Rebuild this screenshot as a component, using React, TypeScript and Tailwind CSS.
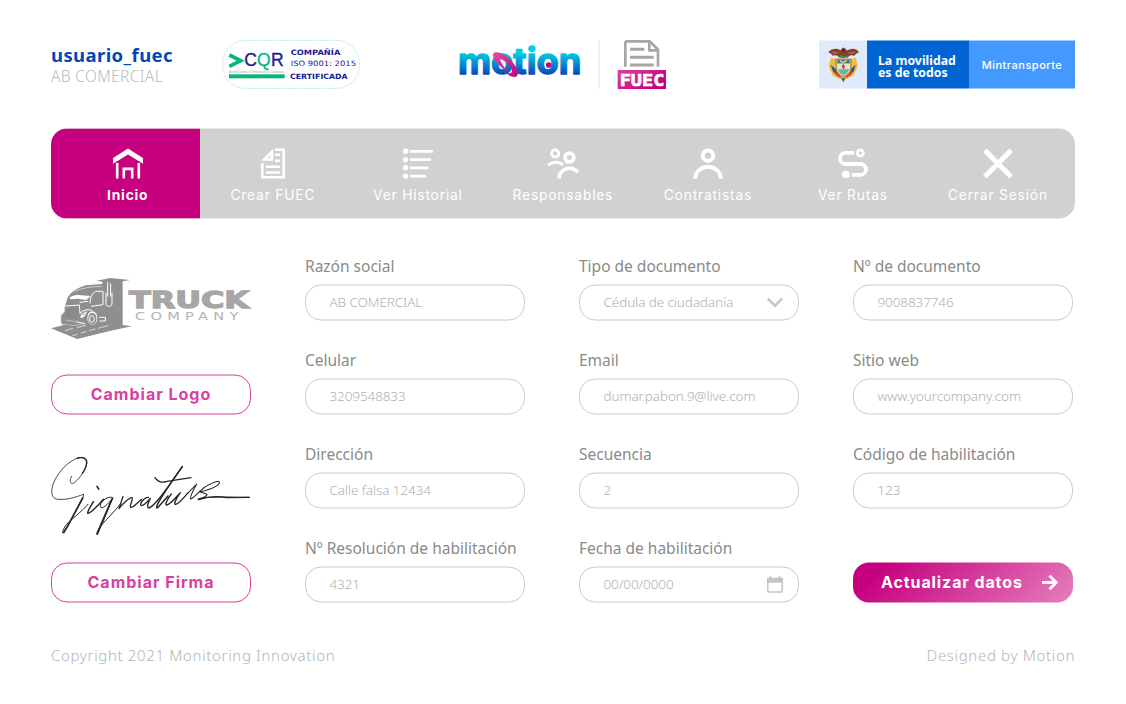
import type { ReactNode } from "react";

function CqrLogo() {
  return (
    <svg className="h-[49px] w-[138px]" viewBox="546 30 414 147">
      <rect x="548" y="31" width="410" height="144" rx="68" fill="none" stroke="#b5eed9" strokeWidth="2.5" strokeDasharray="14 3" />
      <path d="M568 75L602 92L568 109" fill="none" stroke="#07b67d" strokeWidth="11" />
      <g fontFamily="Liberation Sans, sans-serif" strokeWidth="1">
        <text x="613" y="108" fontSize="54" textLength="38" lengthAdjust="spacingAndGlyphs" fill="#1a1a96" stroke="#1a1a96">C</text>
        <text x="651" y="108" fontSize="54" textLength="41" lengthAdjust="spacingAndGlyphs" fill="#07b67d" stroke="#07b67d">Q</text>
        <text x="693" y="108" fontSize="54" textLength="38" lengthAdjust="spacingAndGlyphs" fill="#1a1a96" stroke="#1a1a96">R</text>
      </g>
      <text x="568" y="128" fontSize="8" fontFamily="Liberation Sans, sans-serif" textLength="164" fill="#999">Multiplicamos el Sentido de la Confianza</text>
      <rect x="567" y="133" width="167" height="12" fill="#07b67d" />
      <g fill="#1a1a96" fontFamily="DejaVu Sans, sans-serif">
        <text x="752" y="74" fontSize="22" fontWeight="700" textLength="149" lengthAdjust="spacingAndGlyphs">COMPAÑÍA</text>
        <text x="752" y="109" fontSize="22" textLength="196" lengthAdjust="spacingAndGlyphs">ISO 9001: 2015</text>
        <text x="750" y="146" fontSize="22" fontWeight="700" textLength="173" lengthAdjust="spacingAndGlyphs">CERTIFICADA</text>
      </g>
    </svg>
  );
}

function MotionLogo() {
  return (
    <svg className="h-[30px] w-[122px] overflow-visible" viewBox="27 56 366 90">
      <defs>
        <linearGradient id="motionBlue" x1="0" y1="60" x2="0" y2="134" gradientUnits="userSpaceOnUse">
          <stop offset="0.1" stopColor="#00cfe3" />
          <stop offset="1" stopColor="#0646bd" />
        </linearGradient>
        <linearGradient id="motionPink" x1="0" y1="0" x2="1" y2="1">
          <stop offset="0" stopColor="#e04fa6" />
          <stop offset="1" stopColor="#c5007f" />
        </linearGradient>
      </defs>
      <text x="24" y="132" fill="url(#motionBlue)" stroke="url(#motionBlue)" strokeWidth="4" strokeLinejoin="round" fontFamily="Inter, sans-serif" fontWeight="700" fontSize="106" textLength="370" lengthAdjust="spacingAndGlyphs">motion</text>
      <path d="M130 70C135 62 155 66 174 82C197 101 209 126 201 137C195 144 177 137 161 124C175 131 186 130 186 122C184 107 168 92 150 85C153 100 166 116 179 127C158 118 123 85 130 70Z" fill="url(#motionPink)" />
      <circle cx="296" cy="104" r="8.5" fill="#c5007f" />
    </svg>
  );
}

function FuecLogo() {
  return (
    <svg className="h-[49px] w-[50px] overflow-visible" viewBox="502 30 150 147">
      <defs>
        <linearGradient id="fuecPink" x1="0" y1="0" x2="1" y2="0.6">
          <stop offset="0" stopColor="#d843a2" />
          <stop offset="1" stopColor="#c5007f" />
        </linearGradient>
      </defs>
      <path d="M527 110V39Q527 34 532 34H600L625 59V110" fill="none" stroke="#a5a7a6" strokeWidth="8" />
      <path d="M599 34V61H626" fill="none" stroke="#a5a7a6" strokeWidth="8" />
      <path d="M541 58H584M541 82H612M541 105H612" stroke="#a5a7a6" strokeWidth="9" />
      <rect x="504" y="120" width="145" height="57" fill="url(#fuecPink)" />
      <text x="510" y="167" fontFamily="DejaVu Sans Mono, monospace" fontWeight="700" fontSize="50" textLength="134" lengthAdjust="spacingAndGlyphs" fill="#fff" stroke="#fff" strokeWidth="2">FUEC</text>
    </svg>
  );
}

function CoatOfArms() {
  return (
    <svg className="h-[36px] w-[33px]" viewBox="50 49 99 108">
      <path d="M62 82L55 108L67 136L91 147L82 90ZM136 82L142 108L130 136L107 147L116 90Z" fill="#f3bd32" />
      <path d="M61 104L68 124L87 139L82 122ZM136 104L130 124L111 139L116 122Z" fill="#24549c" />
      <path d="M67 122L78 135L94 146L87 130ZM130 122L120 135L104 146L111 130Z" fill="#cf3036" />
      <path d="M53 66Q70 49 91 60L97 52L105 55L110 61Q132 49 146 66Q136 70 132 77Q119 71 112 82H87Q78 71 67 77Q63 68 53 66Z" fill="#85402c" />
      <path d="M66 67L84 69M114 69L133 67" stroke="#bd6b45" strokeWidth="4" />
      <circle cx="99" cy="60" r="5" fill="#46302c" />
      <path d="M89 77Q99 86 110 77" fill="none" stroke="#3c9153" strokeWidth="6" />
      <path d="M77 87H122V114Q120 134 99 140Q79 134 77 114Z" fill="#e5d6a0" stroke="#bd852e" strokeWidth="4" />
      <path d="M81 89H118V100H81Z" fill="#2875aa" />
      <path d="M81 101H118V115H81Z" fill="#d9e9de" />
      <path d="M83 117H116Q111 132 99 135Q87 130 83 117Z" fill="#6fb3b0" />
      <path d="M88 91L98 97L110 91" fill="none" stroke="#f4c445" strokeWidth="5" />
      <path d="M94 108L99 101L104 109L100 119Z" fill="#d03b35" />
      <path d="M90 142L99 157L107 142Z" fill="#bd852e" />
      <path d="M94 145L99 154L104 145Z" fill="#34549b" />
    </svg>
  );
}

function TruckLogo() {
  return (
    <svg className="h-[61px] w-[200px] overflow-visible" viewBox="33 39 600 183">
      <path d="M170 47L210 39L271 45L248 49V180L275 184L206 199L112 222L33 190L72 180L62 174V149L74 141V125L83 98Q98 72 137 61L187 57V50Z" fill="#8d908e" />
      <path d="M104 80Q130 65 186 64" fill="none" stroke="#e8e8e8" strokeWidth="2" />
      <path d="M90 97Q97 91 113 90L153 93L138 105L113 101L90 103Z" fill="#fff" />
      <path d="M150 116Q149 91 166 79H189V119L153 124" fill="none" stroke="#fff" strokeWidth="3" />
      <path d="M75 123L118 120L120 146" fill="none" stroke="#fff" strokeWidth="3" />
      <path d="M82 130V158M89 129V159M96 129V160M103 128V161M110 127V162" stroke="#7b7e7c" strokeWidth="2" />
      <path d="M119 112L144 109M120 145Q138 128 157 137M108 170L135 176M69 145L62 152V176" fill="none" stroke="#fff" strokeWidth="3" />
      <path d="M76 165L106 169M72 178L104 182L132 176" fill="none" stroke="#e8e8e8" strokeWidth="1.5" />
      <path d="M124 148L141 138L136 151Q128 161 121 158Z" fill="#fff" />
      <path d="M126 150L136 144L132 151Z" fill="#8d908e" />
      <ellipse cx="157" cy="159" rx="15" ry="20" fill="#fff" />
      <ellipse cx="157" cy="161" rx="12.5" ry="17.5" fill="#8d908e" />
      <ellipse cx="156" cy="162" rx="7" ry="10" fill="none" stroke="#fff" strokeWidth="3" />
      <path d="M178 157H196V168H178M203 51V95M212 55V95" fill="none" stroke="#fff" strokeWidth="3" />
      <path d="M198 83V119Q206 130 216 119V83" fill="none" stroke="#fff" strokeWidth="3" />
      <path d="M97 212L113 208M123 204L139 200M148 197L166 192M75 197L99 190M111 188L137 181M174 190L205 182" stroke="#fff" strokeWidth="2" />
      <text x="267" y="129" fontFamily="DejaVu Sans, sans-serif" fontWeight="700" fontSize="71" textLength="360" lengthAdjust="spacingAndGlyphs" fill="#a6a6a6" stroke="#a6a6a6" strokeWidth="4">TRUCK</text>
      <text x="285" y="164" fontFamily="DejaVu Sans, sans-serif" fontSize="34" textLength="326" lengthAdjust="spacingAndGlyphs" letterSpacing="12" fill="#b4b4b4">COMPANY</text>
    </svg>
  );
}

function Signature() {
  return (
    <svg className="h-[80px] w-[200px]" viewBox="33 33 600 240" fill="none" stroke="#262626" strokeLinecap="round" strokeLinejoin="round">
      <path d="M95 94C87 105 91 118 98 116C114 109 146 66 140 47C132 25 91 42 63 77C34 112 25 155 49 162C75 167 107 157 130 148" strokeWidth="2.5" />
      <path d="M113 39Q137 34 140 50Q141 65 127 85" strokeWidth="4" />
      <path d="M130 148C134 147 129 159 121 172C104 208 78 252 70 262C63 270 71 243 92 226C108 212 124 200 144 178" strokeWidth="3" />
      <path d="M128 159L98 215Q84 244 71 263" strokeWidth="5" />
      <path d="M171 124L176 132" strokeWidth="5" />
      <path d="M160 170C154 181 141 200 143 205C151 207 172 183 190 163" strokeWidth="4.5" />
      <path d="M217 157C196 152 174 180 183 188C191 192 211 169 219 158L187 235L172 268C168 272 171 257 179 248C194 227 223 201 242 176" strokeWidth="3" />
      <path d="M216 162L182 240L172 267" strokeWidth="5" />
      <path d="M249 154L237 191C245 179 269 157 276 158C281 161 267 184 272 187C280 188 291 174 305 163" strokeWidth="4" />
      <path d="M325 157C312 156 296 179 304 182C313 182 325 167 331 160C324 173 319 188 327 189C343 184 371 144 390 118L427 65" strokeWidth="4" />
      <path d="M427 65Q373 139 351 181Q347 195 357 184L384 153" strokeWidth="4.5" />
      <path d="M345 98C353 111 366 114 381 109L453 98" strokeWidth="4" />
      <path d="M394 147C381 164 373 181 381 180C393 177 409 155 421 143C407 163 400 179 407 178C419 175 432 156 443 145" strokeWidth="4" />
      <path d="M443 145L470 117C460 135 449 158 452 162C458 163 487 126 507 119C531 107 541 108 538 114C532 127 494 139 480 140C477 142 496 143 501 149C501 155 480 160 474 163C508 151 553 158 628 157" strokeWidth="3.2" />
      <path d="M476 164Q515 150 560 158L628 157" strokeWidth="4" />
    </svg>
  );
}

const navIcons: Record<string, ReactNode> = {
  home: (
    <>
      <path d="M0 9.5L15 0L30 9.5V15.2L15 5.9L0 15.2Z" fill="currentColor" />
      <path d="M4.2 14.5V30M25.8 14.5V30M10.8 30V20.4H19.2V30" strokeWidth="2.6" />
    </>
  ),
  file: (
    <>
      <path d="M3 12.3L15.3 0V12.3ZM9.2 9.7H12.3V6.5Z" fill="currentColor" fillRule="evenodd" />
      <path d="M17 1.3H25.7V28.7H4.3V14.8M17 6.2H22M17 12.2H22M8 18.2H22M8 24H22" strokeWidth="2.6" />
    </>
  ),
  list: (
    <>
      <path d="M7 2.8H30M7 11.1H28M7 19.3H25.5M7 27.6H23" strokeWidth="2.7" />
      <g fill="currentColor">
        <circle cx="2.6" cy="2.8" r="2.7" />
        <circle cx="2.6" cy="11.1" r="2.7" />
        <circle cx="2.6" cy="19.3" r="2.7" />
        <circle cx="2.6" cy="27.6" r="2.7" />
      </g>
    </>
  ),
  people: (
    <>
      <circle cx="7.2" cy="5" r="3.7" strokeWidth="2.7" />
      <circle cx="21.4" cy="9" r="4.4" strokeWidth="3.8" />
      <path d="M0 16.5Q7.5 11 15.3 16.2" strokeWidth="3" />
      <path d="M11 30A10.6 10.6 0 0 1 30 23.8" strokeWidth="3.8" />
    </>
  ),
  person: (
    <>
      <circle cx="15" cy="7.2" r="5.2" strokeWidth="4" />
      <path d="M1.9 30.2C4 14.2 26 14.2 28.1 30.2" strokeWidth="4" />
    </>
  ),
  route: (
    <>
      <path d="M16 4.3H7.6A5.6 5.6 0 0 0 7.6 15.5H22.5A5.4 5.4 0 0 1 22.5 26.3H13.8" strokeWidth="3.8" />
      <circle cx="22.3" cy="4.4" r="3.1" strokeWidth="2.7" />
      <circle cx="7.8" cy="26" r="3.8" fill="currentColor" />
    </>
  ),
  close: <path d="M1.8 1.8L28.2 28.2M28.2 1.8L1.8 28.2" strokeWidth="5" />,
};

const navItems = [
  { icon: "file", label: "Crear FUEC" },
  { icon: "list", label: "Ver Historial" },
  { icon: "people", label: "Responsables" },
  { icon: "person", label: "Contratistas" },
  { icon: "route", label: "Ver Rutas" },
  { icon: "close", label: "Cerrar Sesión" },
];

function NavIcon({ name }: { name: string }) {
  return (
    <svg
      className="h-[30px] w-[30px] overflow-visible"
      viewBox="0 0 30 30"
      fill="none"
      stroke="currentColor"
      strokeWidth="0"
    >
      {navIcons[name]}
    </svg>
  );
}

function ChevronIcon() {
  return (
    <svg className="h-4 w-4" viewBox="0 0 16 16" fill="none" stroke="#c4c4c4" strokeWidth="2.4">
      <path d="M0.8 4L8 11.2L15.2 4" />
    </svg>
  );
}

function CalendarIcon() {
  return (
    <svg className="h-4 w-4 overflow-visible" viewBox="0 0 16 16" fill="none" stroke="#c4c4c4">
      <path d="M0 1.2H16V6.2H0Z" fill="#c4c4c4" stroke="none" />
      <path d="M0.8 5V14.7Q0.8 15.5 1.6 15.5H14.4Q15.2 15.5 15.2 14.7V5" strokeWidth="1.5" />
      <path d="M3.5 -0.5V3M12.5 -0.5V3" strokeWidth="1.5" />
    </svg>
  );
}

type FieldProps = { label: string; value: string; icon?: ReactNode };

const fields: FieldProps[] = [
  { label: "Razón social", value: "AB COMERCIAL" },
  { label: "Tipo de documento", value: "Cédula de ciudadanía", icon: <ChevronIcon /> },
  { label: "Nº de documento", value: "9008837746" },
  { label: "Celular", value: "3209548833" },
  { label: "Email", value: "dumar.pabon.9@live.com" },
  { label: "Sitio web", value: "www.yourcompany.com" },
  { label: "Dirección", value: "Calle falsa 12434" },
  { label: "Secuencia", value: "2" },
  { label: "Código de habilitación", value: "123" },
  { label: "Nº Resolución de habilitación", value: "4321" },
  { label: "Fecha de habilitación", value: "00/00/0000", icon: <CalendarIcon /> },
];

function Field({ label, value, icon }: FieldProps) {
  return (
    <div className="flex flex-col gap-2">
      <label className="h-5 whitespace-nowrap text-[15.5px] leading-5 text-[#8a8a8a]">{label}</label>
      <div className="flex h-9 translate-y-[0.5px] items-center justify-between rounded-2xl border border-[#cbcbcb] pr-[15px] pl-[23.5px]">
        <span className="pb-0.5 whitespace-nowrap text-[13.5px] font-light tracking-[-0.1px] text-[#b0b0b0]">{value}</span>
        {icon}
      </div>
    </div>
  );
}

function OutlineButton({ children }: { children: ReactNode }) {
  return (
    <button className="h-10 w-[200px] translate-y-[0.5px] rounded-2xl border border-[#d8409f] pb-[3px] font-[Inter,sans-serif] text-base font-bold tracking-[1px] text-[#d8409f]">
      {children}
    </button>
  );
}

export default function App() {
  return (
    <div className="flex h-[704px] w-[1126px] flex-col bg-white pt-10 pr-[51px] pl-[51px] font-['Noto_Sans',sans-serif]">
      <header className="flex h-[49px] items-start">
        <div className="flex w-[171px] flex-col pt-1">
          <span className="text-[18.5px] leading-[22px] font-bold tracking-[0.4px] text-[#0047bb]">usuario_fuec</span>
          <span className="text-[15.5px] leading-5 font-light tracking-[0.35px] whitespace-nowrap text-[#bcbcbc]">AB COMERCIAL</span>
        </div>
        <CqrLogo />
        <div className="ml-[99px] flex h-[49px] items-start">
          <div className="pt-[9px]"><MotionLogo /></div>
          <div className="ml-[17px] h-[49px] w-0.5 bg-[#f0f0f0]" />
          <div className="ml-[17px]"><FuecLogo /></div>
        </div>
        <div className="ml-auto flex h-12 w-[256px] translate-y-[0.5px] text-white">
          <div className="flex w-12 items-center justify-center bg-[#dfebfd]"><CoatOfArms /></div>
          <div className="flex w-[102px] items-center bg-[#0064d2] pt-[3px] pl-[11px] text-[12.3px] leading-3 font-bold">
            <span className="whitespace-nowrap">La movilidad<br />es de todos</span>
          </div>
          <div className="flex w-[106px] items-center justify-center bg-[#4499ff] font-[Inter,sans-serif] text-[11px] font-medium tracking-[0.5px]">Mintransporte</div>
        </div>
      </header>

      <nav className="mt-[39px] flex h-[90px] w-[1024px] translate-y-[0.5px] overflow-hidden rounded-2xl bg-[#d1d1d1] font-[Inter,sans-serif] text-[13.8px] text-white">
        <a className="flex w-[149.4px] flex-col items-center bg-[#c6007e] pt-5 pl-1 font-bold">
          <NavIcon name="home" />
          <span className="mt-[6px] leading-5 tracking-[0.8px]">Inicio</span>
        </a>
        {navItems.map((item) => (
          <a key={item.label} className="flex w-[145px] flex-col items-center pt-5">
            <NavIcon name={item.icon} />
            <span className="mt-[6px] leading-5 tracking-[0.8px] whitespace-nowrap">{item.label}</span>
          </a>
        ))}
      </nav>

      <main className="mt-[38px] flex">
        <aside className="mr-[54px] flex w-[200px] flex-col pt-[22px]">
          <TruckLogo />
          <div className="mt-[35px] h-10"><OutlineButton>Cambiar Logo</OutlineButton></div>
          <div className="mt-[42px]"><Signature /></div>
          <div className="mt-[26px] h-10"><OutlineButton>Cambiar Firma</OutlineButton></div>
        </aside>
        <form className="grid grid-cols-[220px_220px_220px] items-end gap-x-[54px] gap-y-[30px]">
          {fields.map((field) => (
            <Field key={field.label} {...field} />
          ))}
          <button type="button" className="flex h-10 translate-y-[0.5px] items-center justify-between rounded-2xl bg-linear-[135deg,#c6007e_12%,#e57fbd] pr-[15px] pb-0.5 pl-7 font-[Inter,sans-serif] text-base font-bold text-white">
            <span className="tracking-[0.9px] whitespace-nowrap">Actualizar datos</span>
            <svg className="mt-0.5 h-4 w-4" viewBox="0 0 16 16" fill="none" stroke="currentColor" strokeWidth="2.8">
              <path d="M0 8H14M7.5 1.2L14.2 8L7.5 14.8" />
            </svg>
          </button>
        </form>
      </main>

      <footer className="mt-[43px] flex justify-between text-[15px] leading-5 font-light tracking-[0.66px] text-[#b4b4b4]">
        <span>Copyright 2021 Monitoring Innovation</span>
        <span>Designed by Motion</span>
      </footer>
    </div>
  );
}
